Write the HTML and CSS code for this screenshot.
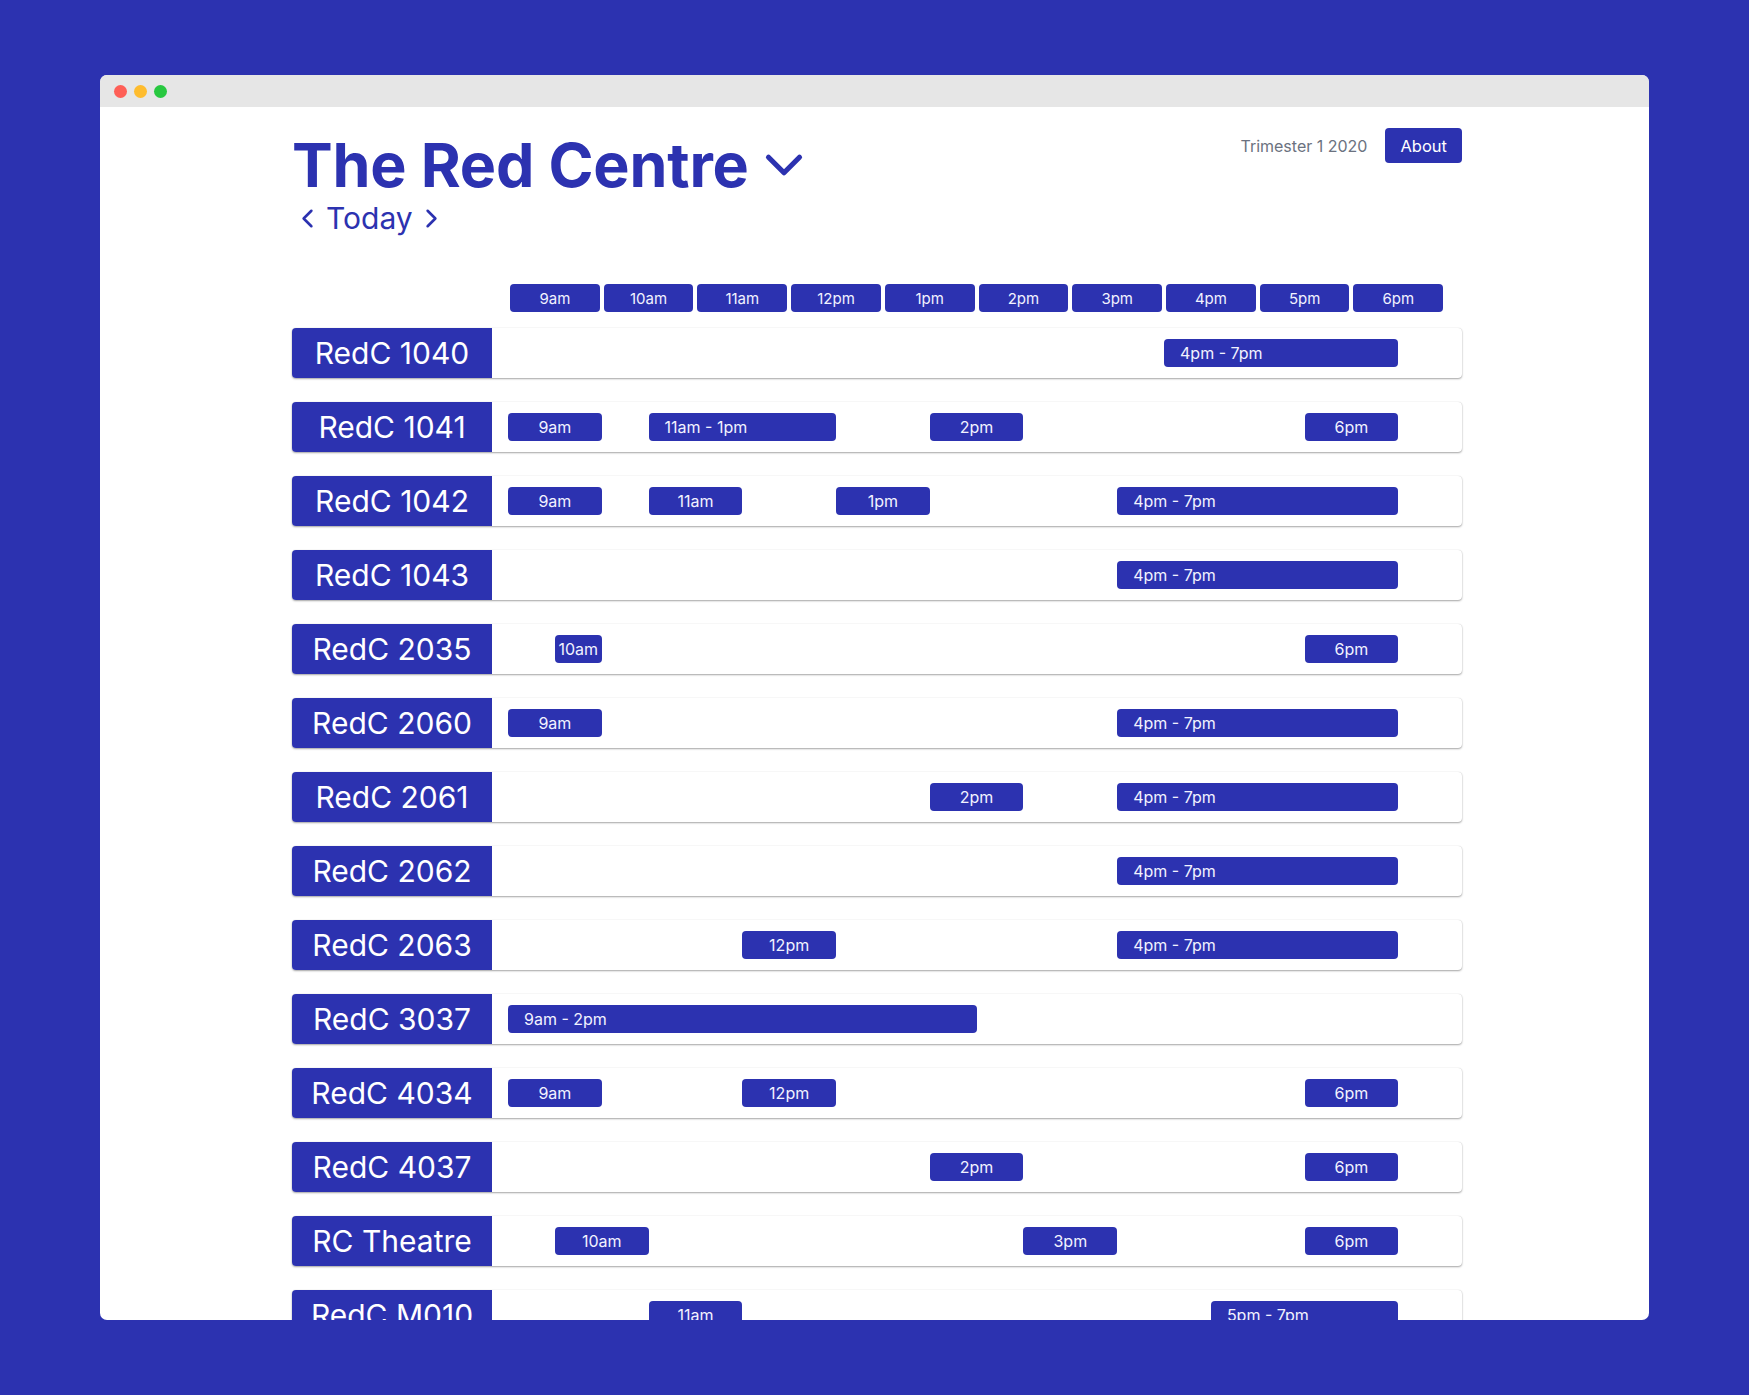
FILE: index.html
```html
<!DOCTYPE html>
<html lang="en">
<head>
<meta charset="utf-8">
<title>The Red Centre</title>
<link rel="stylesheet" href="styles.css">
</head>
<body>
<div class="window">
  <div class="titlebar">
    <span class="dot dot-red"></span>
    <span class="dot dot-yellow"></span>
    <span class="dot dot-green"></span>
  </div>
  <div class="content">
    <header class="header">
      <div class="heading">
        <h1 class="title">The Red Centre
          <svg class="title-chevron" viewBox="0 0 24 24" fill="none" stroke="currentColor" stroke-width="2" stroke-linecap="round" stroke-linejoin="round"><polyline points="6 9 12 15 18 9"/></svg>
        </h1>
        <div class="daynav">
          <svg class="nav-icon" viewBox="0 0 24 24" fill="none" stroke="currentColor" stroke-width="2" stroke-linecap="round" stroke-linejoin="round"><polyline points="15 18 9 12 15 6"/></svg>
          <span class="day">Today</span>
          <svg class="nav-icon" viewBox="0 0 24 24" fill="none" stroke="currentColor" stroke-width="2" stroke-linecap="round" stroke-linejoin="round"><polyline points="9 18 15 12 9 6"/></svg>
        </div>
      </div>
      <div class="meta">
        <span class="term">Trimester 1 2020</span>
        <button class="about">About</button>
      </div>
    </header>

    <div class="hours">
      <div class="hour"><span>9am</span></div>
      <div class="hour"><span>10am</span></div>
      <div class="hour"><span>11am</span></div>
      <div class="hour"><span>12pm</span></div>
      <div class="hour"><span>1pm</span></div>
      <div class="hour"><span>2pm</span></div>
      <div class="hour"><span>3pm</span></div>
      <div class="hour"><span>4pm</span></div>
      <div class="hour"><span>5pm</span></div>
      <div class="hour"><span>6pm</span></div>
    </div>

    <div class="rooms">
      <div class="room"><div class="room-name">RedC 1040</div><div class="timeline">
        <div class="slot range" style="grid-column: 15 / span 5">4pm - 7pm</div>
      </div></div>

      <div class="room"><div class="room-name">RedC 1041</div><div class="timeline">
        <div class="slot" style="grid-column: 1 / span 2">9am</div>
        <div class="slot range" style="grid-column: 4 / span 4">11am - 1pm</div>
        <div class="slot" style="grid-column: 10 / span 2">2pm</div>
        <div class="slot" style="grid-column: 18 / span 2">6pm</div>
      </div></div>

      <div class="room"><div class="room-name">RedC 1042</div><div class="timeline">
        <div class="slot" style="grid-column: 1 / span 2">9am</div>
        <div class="slot" style="grid-column: 4 / span 2">11am</div>
        <div class="slot" style="grid-column: 8 / span 2">1pm</div>
        <div class="slot range" style="grid-column: 14 / span 6">4pm - 7pm</div>
      </div></div>

      <div class="room"><div class="room-name">RedC 1043</div><div class="timeline">
        <div class="slot range" style="grid-column: 14 / span 6">4pm - 7pm</div>
      </div></div>

      <div class="room"><div class="room-name">RedC 2035</div><div class="timeline">
        <div class="slot" style="grid-column: 2 / span 1">10am</div>
        <div class="slot" style="grid-column: 18 / span 2">6pm</div>
      </div></div>

      <div class="room"><div class="room-name">RedC 2060</div><div class="timeline">
        <div class="slot" style="grid-column: 1 / span 2">9am</div>
        <div class="slot range" style="grid-column: 14 / span 6">4pm - 7pm</div>
      </div></div>

      <div class="room"><div class="room-name">RedC 2061</div><div class="timeline">
        <div class="slot" style="grid-column: 10 / span 2">2pm</div>
        <div class="slot range" style="grid-column: 14 / span 6">4pm - 7pm</div>
      </div></div>

      <div class="room"><div class="room-name">RedC 2062</div><div class="timeline">
        <div class="slot range" style="grid-column: 14 / span 6">4pm - 7pm</div>
      </div></div>

      <div class="room"><div class="room-name">RedC 2063</div><div class="timeline">
        <div class="slot" style="grid-column: 6 / span 2">12pm</div>
        <div class="slot range" style="grid-column: 14 / span 6">4pm - 7pm</div>
      </div></div>

      <div class="room"><div class="room-name">RedC 3037</div><div class="timeline">
        <div class="slot range" style="grid-column: 1 / span 10">9am - 2pm</div>
      </div></div>

      <div class="room"><div class="room-name">RedC 4034</div><div class="timeline">
        <div class="slot" style="grid-column: 1 / span 2">9am</div>
        <div class="slot" style="grid-column: 6 / span 2">12pm</div>
        <div class="slot" style="grid-column: 18 / span 2">6pm</div>
      </div></div>

      <div class="room"><div class="room-name">RedC 4037</div><div class="timeline">
        <div class="slot" style="grid-column: 10 / span 2">2pm</div>
        <div class="slot" style="grid-column: 18 / span 2">6pm</div>
      </div></div>

      <div class="room"><div class="room-name">RC Theatre</div><div class="timeline">
        <div class="slot" style="grid-column: 2 / span 2">10am</div>
        <div class="slot" style="grid-column: 12 / span 2">3pm</div>
        <div class="slot" style="grid-column: 18 / span 2">6pm</div>
      </div></div>

      <div class="room"><div class="room-name">RedC M010</div><div class="timeline">
        <div class="slot" style="grid-column: 4 / span 2">11am</div>
        <div class="slot range" style="grid-column: 16 / span 4">5pm - 7pm</div>
      </div></div>
    </div>
  </div>
</div>
</body>
</html>
```

FILE: styles.css
```css
* { box-sizing: border-box; }

html, body {
  margin: 0;
  padding: 0;
}

body {
  background: #2c32b0;
  font-family: Inter, "Noto Sans", "Liberation Sans", sans-serif;
  height: 1395px;
  overflow: hidden;
  padding: 75px 100px 0 100px;
}

.window {
  width: 1549px;
  height: 1245px;
  background: #ffffff;
  border-radius: 7px;
  overflow: hidden;
}

.titlebar {
  height: 32px;
  background: #e6e6e6;
  display: flex;
  align-items: center;
  gap: 7px;
  padding-left: 13.5px;
}

.dot {
  width: 13px;
  height: 13px;
  border-radius: 50%;
  display: block;
}
.dot-red { background: #fe5f57; }
.dot-yellow { background: #febc2e; }
.dot-green { background: #28c840; }

.content {
  padding-left: 192px;
  width: 1362px;
}

.header {
  display: flex;
  justify-content: space-between;
  align-items: flex-start;
  padding-top: 21px;
}

.heading {
  color: #2c32b0;
}

.title {
  margin: 5px 0 0 0;
  font-size: 61px;
  line-height: 64px;
  font-weight: 700;
  letter-spacing: -0.2px;
  display: flex;
  align-items: center;
  gap: 4px;
}

.title-chevron {
  width: 62px;
  height: 62px;
  flex: none;
}

.daynav {
  display: flex;
  align-items: center;
  gap: 3px;
  margin-top: 3px;
  font-size: 30px;
  line-height: 36px;
}

.nav-icon {
  width: 31px;
  height: 31px;
  flex: none;
}

.meta {
  display: flex;
  align-items: center;
  gap: 18px;
}

.term {
  color: #6b7280;
  font-size: 16px;
}

.about {
  height: 35px;
  padding: 0 15px;
  border: none;
  border-radius: 4px;
  background: #2c32b0;
  color: #ffffff;
  font-family: inherit;
  font-size: 16.5px;
}

.hours {
  display: flex;
  margin-top: 48px;
  margin-left: 216px;
}

.hour {
  width: 93.72px;
  padding: 0 2px;
}

.hour span {
  display: flex;
  align-items: center;
  justify-content: center;
  height: 28px;
  background: #2c32b0;
  color: #f2f2ff;
  border-radius: 4px;
  font-size: 15px;
}

.rooms {
  margin-top: 16px;
  width: 1170px;
}

.room {
  display: flex;
  height: 50px;
  margin-bottom: 24px;
  border-radius: 4px;
  background: #ffffff;
  box-shadow: 0 1px 2px rgba(0, 0, 0, 0.35), 0 0 1px rgba(0, 0, 0, 0.18);
}

.room-name {
  width: 200px;
  flex: none;
  display: flex;
  align-items: center;
  justify-content: center;
  background: #2c32b0;
  color: #ffffff;
  font-size: 30px;
  font-weight: 400;
  border-radius: 4px 0 0 4px;
}

.timeline {
  display: grid;
  grid-template-columns: repeat(20, 46.86px);
  align-items: center;
  padding-left: 16px;
}

.slot {
  grid-row: 1;
  height: 27.5px;
  display: flex;
  align-items: center;
  justify-content: center;
  background: #2c32b0;
  color: #f2f2ff;
  border-radius: 4px;
  font-size: 16px;
  white-space: nowrap;
}

.slot.range {
  justify-content: flex-start;
  padding-left: 16px;
}
```
